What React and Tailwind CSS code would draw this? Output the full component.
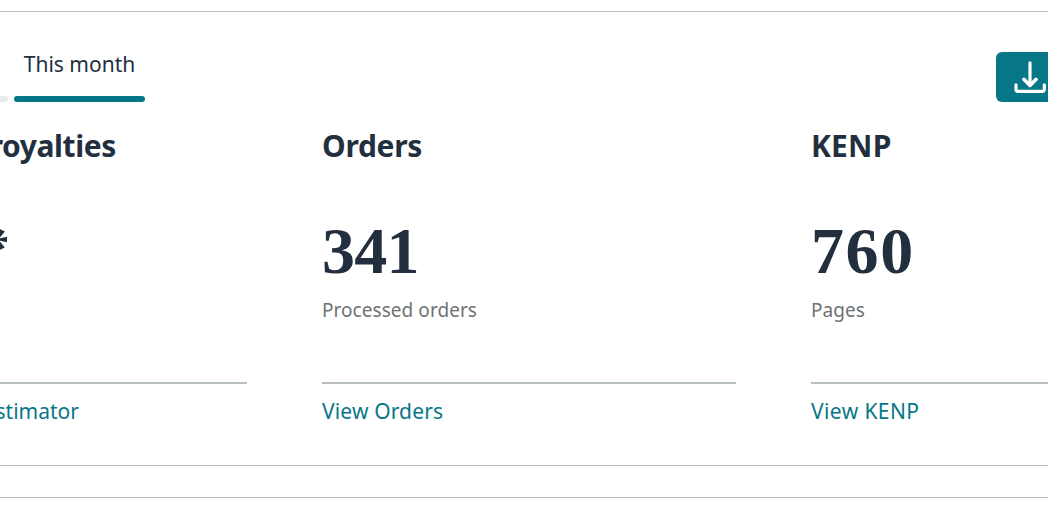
import React from "react";

function DownloadIcon() {
  return (
    <svg
      className="h-8 w-8 shrink-0"
      viewBox="0 0 32 32"
      fill="none"
      stroke="white"
      strokeLinecap="round"
      strokeLinejoin="round"
      aria-hidden="true"
    >
      <path d="M16 1.9V24" strokeWidth="3.2" />
      <path d="M9.9 18.3L16 24.4L22.1 18.3" strokeWidth="3.6" />
      <path d="M2 23.8V28.2Q2 30.3 4.1 30.3H28.2Q30.3 30.3 30.3 28.2V23.8" strokeWidth="3.2" />
    </svg>
  );
}

function Metric({ title, value, caption, link, titleClass, valueClass, linkClass }) {
  return (
    <article className="flex w-[414px] shrink-0 flex-col">
      <h2 className={`h-10 text-[30px] leading-10 font-bold whitespace-nowrap ${titleClass}`}>{title}</h2>
      <div className={`mt-[50px] h-[70px] font-['Liberation_Serif',serif] text-[66px] leading-[70px] font-bold whitespace-nowrap ${valueClass}`}>
        {value}
      </div>
      <p className="mt-[10px] h-7 text-[19px] leading-7 tracking-[0.05px] whitespace-nowrap text-[#6f7373]">{caption}</p>
      <div className="mt-[58px] h-[2px] bg-[#b7c0bf]" />
      <a href="#" className={`mt-[11px] h-8 self-start text-[21px] leading-8 whitespace-nowrap text-[#077787] ${linkClass}`}>
        {link}
      </a>
    </article>
  );
}

export default function App() {
  return (
    <main className="flex h-[520px] w-full flex-col overflow-hidden bg-white font-['Noto_Sans',sans-serif] text-[#232f3e]">
      <section className="mt-[11px] h-[455px] shrink-0 border-y border-[#b7c0bf]">
        <header className="flex h-[90px] items-start justify-between">
          <div className="flex gap-[6px]">
            <div className="mt-[84px] h-[6px] w-2 rounded-r-full bg-[#e9eceb]" />
            <div className="flex w-[131px] flex-col items-center pt-[36px]">
              <span className="h-8 text-[21px] leading-8 whitespace-nowrap">This month</span>
              <div className="mt-4 h-[6px] w-full rounded-full bg-[#077787]" />
            </div>
          </div>
          <button
            type="button"
            aria-label="Download"
            className="mt-10 flex h-[50px] w-[52px] items-center overflow-hidden rounded-l-[6px] bg-[#077787] pl-[18px]"
          >
            <DownloadIcon />
          </button>
        </header>
        <div className="mt-[24px] flex gap-[75px] overflow-hidden">
          <article className="flex w-[247px] shrink-0 flex-col">
            <h2 className="flex h-10 w-[116px] justify-end text-[30px] leading-10 font-bold tracking-[-0.4px] whitespace-nowrap">royalties</h2>
            <div className="mt-[50px] flex h-[70px] w-[13px] justify-end font-['Liberation_Serif',serif] text-[50px] leading-[70px] font-bold">
              <span className="origin-[12px_26px] -translate-y-[3px] rotate-90">*</span>
            </div>
            <div className="mt-[96px] h-[2px] bg-[#b7c0bf]" />
            <a href="#" className="mt-[11px] flex h-8 w-[79px] justify-end text-[21px] leading-8 whitespace-nowrap text-[#077787]">stimator</a>
          </article>
          <Metric title="Orders" value="341" caption="Processed orders" link="View Orders"
            titleClass="tracking-[-0.3px]" valueClass="tracking-[-0.8px]" linkClass="tracking-[0.15px]" />
          <Metric title="KENP" value="760" caption="Pages" link="View KENP"
            titleClass="tracking-[0.2px]" valueClass="tracking-[1.6px]" linkClass="tracking-[0.4px]" />
        </div>
      </section>
      <section className="mt-[31px] h-6 shrink-0 border-t border-[#b7c0bf]" />
    </main>
  );
}
